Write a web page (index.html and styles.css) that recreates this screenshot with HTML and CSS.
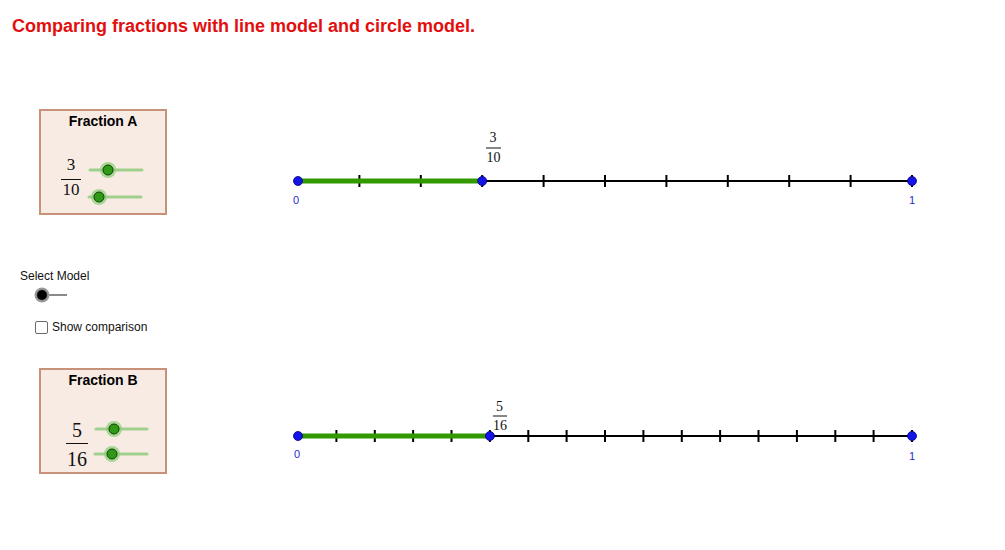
FILE: index.html
```
<!DOCTYPE html>
<html>
<head>
<meta charset="utf-8">
<link rel="stylesheet" href="styles.css">
</head>
<body>
<div class="app">
  <h1 class="title">Comparing fractions with line model and circle model.</h1>
  <div class="stage">
    <div class="controls">
      <div class="panel panel-a">
        <div class="panel-title">Fraction A</div>
        <div class="panel-body">
          <div class="frac"><span class="num">3</span><span class="den">10</span></div>
          <svg class="sliders" width="64" height="48" viewBox="0 0 64 48">
            <line class="s-track" x1="6" y1="13" x2="58" y2="13"/>
            <circle class="s-halo" cx="24" cy="13" r="8"/>
            <circle class="s-knob" cx="24" cy="13" r="5"/>
            <line class="s-track" x1="5" y1="40" x2="57" y2="40"/>
            <circle class="s-halo" cx="15" cy="40" r="8"/>
            <circle class="s-knob" cx="15" cy="40" r="5"/>
          </svg>
        </div>
      </div>

      <div class="model">
        <div class="model-label">Select Model</div>
        <svg class="model-slider" width="40" height="16" viewBox="0 0 40 16">
          <line class="m-track" x1="10" y1="8" x2="35" y2="8"/>
          <circle class="m-halo" cx="10" cy="8" r="7.5"/>
          <circle class="m-knob" cx="10" cy="8" r="5"/>
        </svg>
        <label class="check-row"><span class="box"></span><span class="check-text">Show comparison</span></label>
      </div>

      <div class="panel panel-b">
        <div class="panel-title">Fraction B</div>
        <div class="panel-body">
          <div class="frac"><span class="num">5</span><span class="den">16</span></div>
          <svg class="sliders" width="64" height="48" viewBox="0 0 64 48">
            <line class="s-track" x1="6" y1="9" x2="57" y2="9"/>
            <circle class="s-halo" cx="24" cy="9" r="8"/>
            <circle class="s-knob" cx="24" cy="9" r="5"/>
            <line class="s-track" x1="5" y1="34" x2="57" y2="34"/>
            <circle class="s-halo" cx="22" cy="34" r="8"/>
            <circle class="s-knob" cx="22" cy="34" r="5"/>
          </svg>
        </div>
      </div>
    </div>

    <svg class="lines" width="725" height="500" viewBox="0 0 725 500">
      <!-- Line A: tenths -->
      <line class="axis" x1="18" y1="131" x2="632" y2="131"/>
      <g class="ticks">
        <line x1="79.4" y1="125" x2="79.4" y2="137"/>
        <line x1="140.8" y1="125" x2="140.8" y2="137"/>
        <line x1="202.2" y1="125" x2="202.2" y2="137"/>
        <line x1="263.6" y1="125" x2="263.6" y2="137"/>
        <line x1="325" y1="125" x2="325" y2="137"/>
        <line x1="386.4" y1="125" x2="386.4" y2="137"/>
        <line x1="447.8" y1="125" x2="447.8" y2="137"/>
        <line x1="509.2" y1="125" x2="509.2" y2="137"/>
        <line x1="570.6" y1="125" x2="570.6" y2="137"/>
        <line x1="632" y1="125" x2="632" y2="137"/>
      </g>
      <line class="fill" x1="18" y1="131" x2="202.2" y2="131"/>
      <circle class="pt" cx="18" cy="131" r="4.5"/>
      <circle class="pt" cx="202.2" cy="131" r="4.5"/>
      <circle class="pt" cx="632" cy="131" r="4.5"/>
      <text class="end-label" x="16" y="154">0</text>
      <text class="end-label" x="632" y="154">1</text>
      <text class="frac-label" x="213" y="92">3</text>
      <line class="frac-bar" x1="206" y1="98" x2="221" y2="98"/>
      <text class="frac-label" x="213.5" y="112">10</text>

      <!-- Line B: sixteenths -->
      <line class="axis" x1="18" y1="386" x2="632" y2="386"/>
      <g class="ticks">
        <line x1="56.4" y1="380" x2="56.4" y2="392"/>
        <line x1="94.8" y1="380" x2="94.8" y2="392"/>
        <line x1="133.1" y1="380" x2="133.1" y2="392"/>
        <line x1="171.5" y1="380" x2="171.5" y2="392"/>
        <line x1="209.9" y1="380" x2="209.9" y2="392"/>
        <line x1="248.3" y1="380" x2="248.3" y2="392"/>
        <line x1="286.6" y1="380" x2="286.6" y2="392"/>
        <line x1="325" y1="380" x2="325" y2="392"/>
        <line x1="363.4" y1="380" x2="363.4" y2="392"/>
        <line x1="401.8" y1="380" x2="401.8" y2="392"/>
        <line x1="440.1" y1="380" x2="440.1" y2="392"/>
        <line x1="478.5" y1="380" x2="478.5" y2="392"/>
        <line x1="516.9" y1="380" x2="516.9" y2="392"/>
        <line x1="555.3" y1="380" x2="555.3" y2="392"/>
        <line x1="593.6" y1="380" x2="593.6" y2="392"/>
        <line x1="632" y1="380" x2="632" y2="392"/>
      </g>
      <line class="fill" x1="18" y1="386" x2="209.9" y2="386"/>
      <circle class="pt" cx="18" cy="386" r="4.5"/>
      <circle class="pt" cx="209.9" cy="386" r="4.5"/>
      <circle class="pt" cx="632" cy="386" r="4.5"/>
      <text class="end-label" x="17" y="408">0</text>
      <text class="end-label" x="632" y="410">1</text>
      <text class="frac-label" x="219.5" y="361">5</text>
      <line class="frac-bar" x1="213" y1="366" x2="227" y2="366"/>
      <text class="frac-label" x="220" y="380">16</text>
    </svg>
  </div>
</div>
</body>
</html>
```
FILE: styles.css
```
* { box-sizing: border-box; }
html, body { margin: 0; padding: 0; background: #ffffff; }
body { width: 1005px; height: 550px; overflow: hidden; font-family: "Liberation Sans", Arial, sans-serif; }

.app { width: 1005px; height: 550px; }

.title {
  margin: 0;
  height: 50px;
  padding: 16px 0 0 12px;
  font-size: 18px;
  line-height: 20px;
  font-weight: bold;
  color: #e30e0e;
  white-space: nowrap;
}

.stage { display: flex; align-items: flex-start; }

.controls { width: 280px; flex: none; display: flex; flex-direction: column; align-items: flex-start; }

.panel {
  margin-left: 39px;
  width: 128px;
  height: 106px;
  background: #f8ebe4;
  border: 2px solid #c8927a;
}
.panel-a { margin-top: 59px; }
.panel-b { margin-top: 34px; }

.panel-title {
  padding-top: 2px;
  text-align: center;
  font-size: 14px;
  line-height: 16px;
  font-weight: bold;
  color: #000;
}

.panel-body { display: flex; align-items: flex-start; }
.panel-a .panel-body { margin-top: 28px; padding-left: 20px; }
.panel-b .panel-body { margin-top: 32px; padding-left: 25px; }

.frac {
  display: flex;
  flex: none;
  flex-direction: column;
  align-items: stretch;
  font-family: "Liberation Serif", "Times New Roman", serif;
  color: #111;
  text-align: center;
}
.frac .num { display: block; border-bottom: 1px solid #111; }
.frac .den { display: block; }

.panel-a .frac { font-size: 17px; width: 20px; }
.panel-a .num { line-height: 16px; padding-bottom: 6px; }
.panel-a .den { line-height: 16px; padding-top: 2px; }

.panel-b .frac { font-size: 20px; width: 22px; }
.panel-b .num { line-height: 20px; padding-bottom: 3px; }
.panel-b .den { line-height: 20px; padding-top: 5px; }

.sliders { flex: none; }
.panel-a .sliders { margin-left: 3px; }
.panel-b .sliders { margin-left: 2px; }

.s-track { stroke: #9fd08c; stroke-width: 3; stroke-linecap: round; }
.s-halo { fill: #8fcd7b; fill-opacity: 0.75; }
.s-knob { fill: #2f9a16; stroke: #143c0a; stroke-width: 1; }

.model { display: flex; flex-direction: column; align-items: flex-start; }
.model-label {
  margin-top: 54px;
  margin-left: 20px;
  font-size: 12px;
  line-height: 14px;
  color: #111;
}
.model-slider { display: block; margin-left: 32px; margin-top: 4px; }
.m-track { stroke: #8a8a8a; stroke-width: 2; }
.m-halo { fill: #9a9a9a; }
.m-knob { fill: #000000; stroke: #333; stroke-width: 0.5; }

.check-row {
  display: flex;
  align-items: center;
  margin-top: 17px;
  margin-left: 35px;
  height: 14px;
}
.box {
  width: 13px;
  height: 13px;
  border: 1px solid #6b6b6b;
  border-radius: 2px;
  background: #fff;
  margin-right: 4px;
}
.check-text { font-size: 12px; line-height: 14px; color: #111; }

.lines { display: block; flex: none; }
.axis { stroke: #000; stroke-width: 2; }
.ticks line { stroke: #000; stroke-width: 2; }
.fill { stroke: #339900; stroke-width: 5; }
.pt { fill: #1414e8; stroke: #00007a; stroke-width: 0.8; }
.end-label { font-family: "Liberation Sans", Arial, sans-serif; font-size: 11px; fill: #2a2ad0; text-anchor: middle; }
.frac-label { font-family: "Liberation Serif", "Times New Roman", serif; font-size: 14px; fill: #111; text-anchor: middle; }
.frac-bar { stroke: #111; stroke-width: 1; }
```
